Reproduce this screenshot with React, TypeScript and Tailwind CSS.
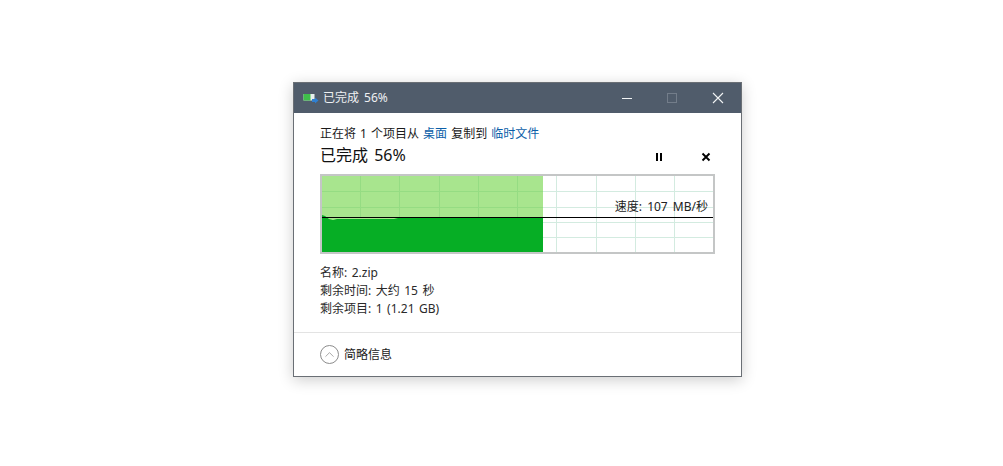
import { ChevronUp } from "lucide-react";

const font = "font-['Noto_Sans','Noto_Sans_CJK_SC',sans-serif]";
const vLines = [360, 399, 439, 478, 517, 556, 596, 635, 674];
const hLines = [191, 207, 222, 237];

function CopyIcon() {
  return (
    <svg width="16" height="12" viewBox="0 0 16 12">
      <rect x="0.5" y="2" width="11" height="6.5" fill="#e8f0ee" />
      <rect x="0.5" y="2" width="7" height="6.5" fill="#3fbf4a" />
      <path d="M9 7 H12 V5.5 L15.5 8.5 L12 11.5 V10 H9 Z" fill="#2f7fd0" />
    </svg>
  );
}

function SpeedChart() {
  return (
    <div className="relative mt-[7px] h-[80px] w-[395px] border-2 border-[#c4c6c6] bg-white">
      <svg width="391" height="76" viewBox="322 176 391 76" className="block">
        {vLines.map((x) => (
          <line key={x} x1={x + 0.5} y1="176" x2={x + 0.5} y2="252" stroke="#d3ebe0" />
        ))}
        {hLines.map((y) => (
          <line key={y} x1="322" y1={y + 0.5} x2="713" y2={y + 0.5} stroke="#d3ebe0" />
        ))}
        <rect x="322" y="176" width="221" height="76" fill="#a8e58e" />
        {vLines.slice(0, 5).map((x) => (
          <line key={x} x1={x + 0.5} y1="176" x2={x + 0.5} y2="218" stroke="#95dc83" />
        ))}
        {hLines.slice(0, 2).map((y) => (
          <line key={y} x1="322" y1={y + 0.5} x2="543" y2={y + 0.5} stroke="#95dc83" />
        ))}
        <path
          d="M322 215 L325 216 L329 219 L333 220 L337 219 L394 219 L398 218 L470 218 L474 217 L478 218 L534 218 L538 217 L543 217 L543 252 L322 252 Z"
          fill="#06ae25"
        />
        <line x1="322" y1="217.5" x2="713" y2="217.5" stroke="#000" />
      </svg>
      <span className="absolute right-[5px] top-[22px] text-xs leading-[18px] text-[#222]">
        速度: 107 MB/秒
      </span>
    </div>
  );
}

export default function App() {
  return (
    <div className={`${font} h-[466px] w-[1003px] overflow-hidden bg-white pl-[293px] pt-[82px] [word-spacing:2px]`}>
      <div className="h-[295px] w-[449px] border border-[#6a6f75] bg-white text-xs text-[#1a1a1a] shadow-[0_3px_14px_rgba(0,0,0,0.2)]">
        <div className="flex h-[30px] items-center bg-[#505c6b] pl-[9px] text-[#eef0f2]">
          <CopyIcon />
          <span className="ml-[4px] text-xs">已完成 56%</span>
          <div className="ml-auto flex items-center">
            <svg width="12" height="12" viewBox="0 0 12 12" className="mr-[33px]">
              <line x1="1" y1="6.5" x2="11" y2="6.5" stroke="#f2f4f5" />
            </svg>
            <svg width="12" height="12" viewBox="0 0 12 12" className="mr-[34px]">
              <rect x="1.5" y="1.5" width="9" height="9" fill="none" stroke="#737d8a" />
            </svg>
            <svg width="12" height="12" viewBox="0 0 12 12" className="mr-[17px]">
              <path d="M1 1 L11 11 M11 1 L1 11" stroke="#f2f4f5" strokeWidth="1.1" />
            </svg>
          </div>
        </div>

        <div className="pl-[26px] pr-[26px]">
          <div className="mt-[12px] flex h-[17px] items-center whitespace-pre leading-[17px]">
            <span className="[word-spacing:1px]">正在将 1 个项目从</span>
            <span className="ml-[4px] text-[#0b5ea8]">桌面</span>
            <span className="ml-[4px]">复制到</span>
            <span className="ml-[4px] text-[#0b5ea8]">临时文件</span>
          </div>
          <div className="mt-[1px] flex h-[24px] items-center">
            <span className="text-base leading-[24px] text-[#111]">已完成 56%</span>
            <div className="ml-auto mt-[4px] flex items-center">
              <svg width="10" height="10" viewBox="0 0 10 10" className="mr-[37px]">
                <path d="M2 1 H4 V9 H2 Z M6 1 H8 V9 H6 Z" fill="#000" />
              </svg>
              <svg width="10" height="10" viewBox="0 0 10 10" className="mr-[4px]">
                <path d="M1.5 1.5 L8.5 8.5 M8.5 1.5 L1.5 8.5" stroke="#000" strokeWidth="1.9" />
              </svg>
            </div>
          </div>

          <SpeedChart />

          <div className="mt-[10px] leading-[18px] text-[#2a2a2a] [word-spacing:1.4px]">
            <div>名称: 2.zip</div>
            <div>剩余时间: 大约 15 秒</div>
            <div>剩余项目: 1 (1.21 GB)</div>
          </div>
        </div>

        <div className="mt-[14px] flex h-[44px] items-center border-t border-[#e3e3e3] pl-[26px]">
          <div className="flex h-[19px] w-[19px] items-center justify-center rounded-full border border-[#8c8c8c]">
            <ChevronUp size={15} strokeWidth={1} color="#777" />
          </div>
          <span className="ml-[5px]">简略信息</span>
        </div>
      </div>
    </div>
  );
}
